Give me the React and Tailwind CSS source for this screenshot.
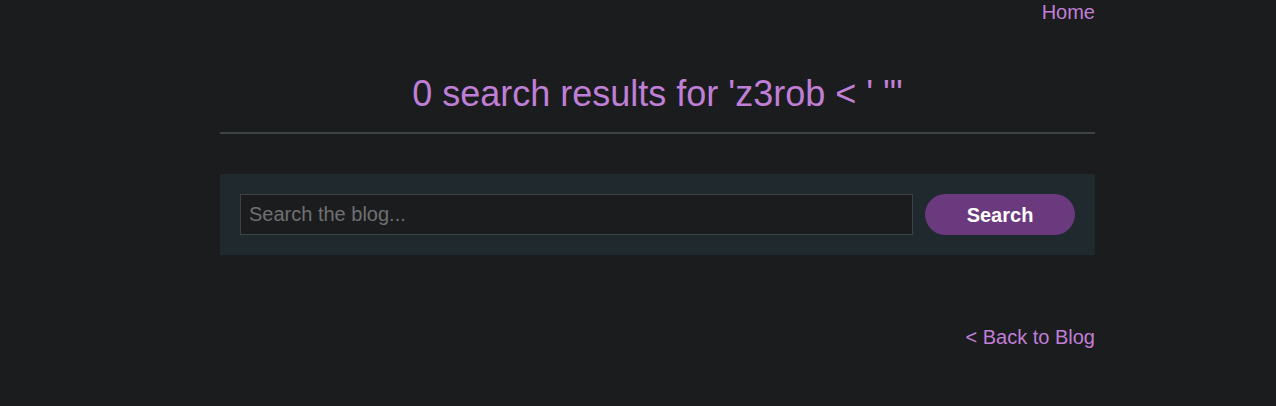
export default function App() {
  return (
    <div className="min-h-[406px] w-full bg-[#1b1c1e] font-['Liberation_Sans',Arial,sans-serif] text-[#c07fd6]">
      <div className="ml-[220px] w-[875px]">
        <div className="flex justify-end">
          <a className="text-[20px] leading-[24px]">Home</a>
        </div>
        <h1 className="mt-[46px] text-center text-[36px] leading-[48px] font-normal">
          0 search results for 'z3rob &lt; ' "'
        </h1>
        <div className="mt-[14px] h-[2px] bg-[#3d4345]" />
        <div className="mt-[40px] flex items-center gap-[12px] bg-[#1f292e] p-[20px]">
          <input
            placeholder="Search the blog..."
            className="h-[41px] flex-1 border border-[#3d4345] bg-[#1b1c1e] px-[8px] text-[20px] text-white placeholder:text-[#6f7072] outline-none"
          />
          <button className="h-[41px] w-[150px] rounded-full bg-[#6b3a7e] text-[20px] font-bold text-white">
            Search
          </button>
        </div>
        <div className="mt-[70px] flex justify-end">
          <a className="text-[20px] leading-[24px]">&lt; Back to Blog</a>
        </div>
      </div>
    </div>
  );
}
